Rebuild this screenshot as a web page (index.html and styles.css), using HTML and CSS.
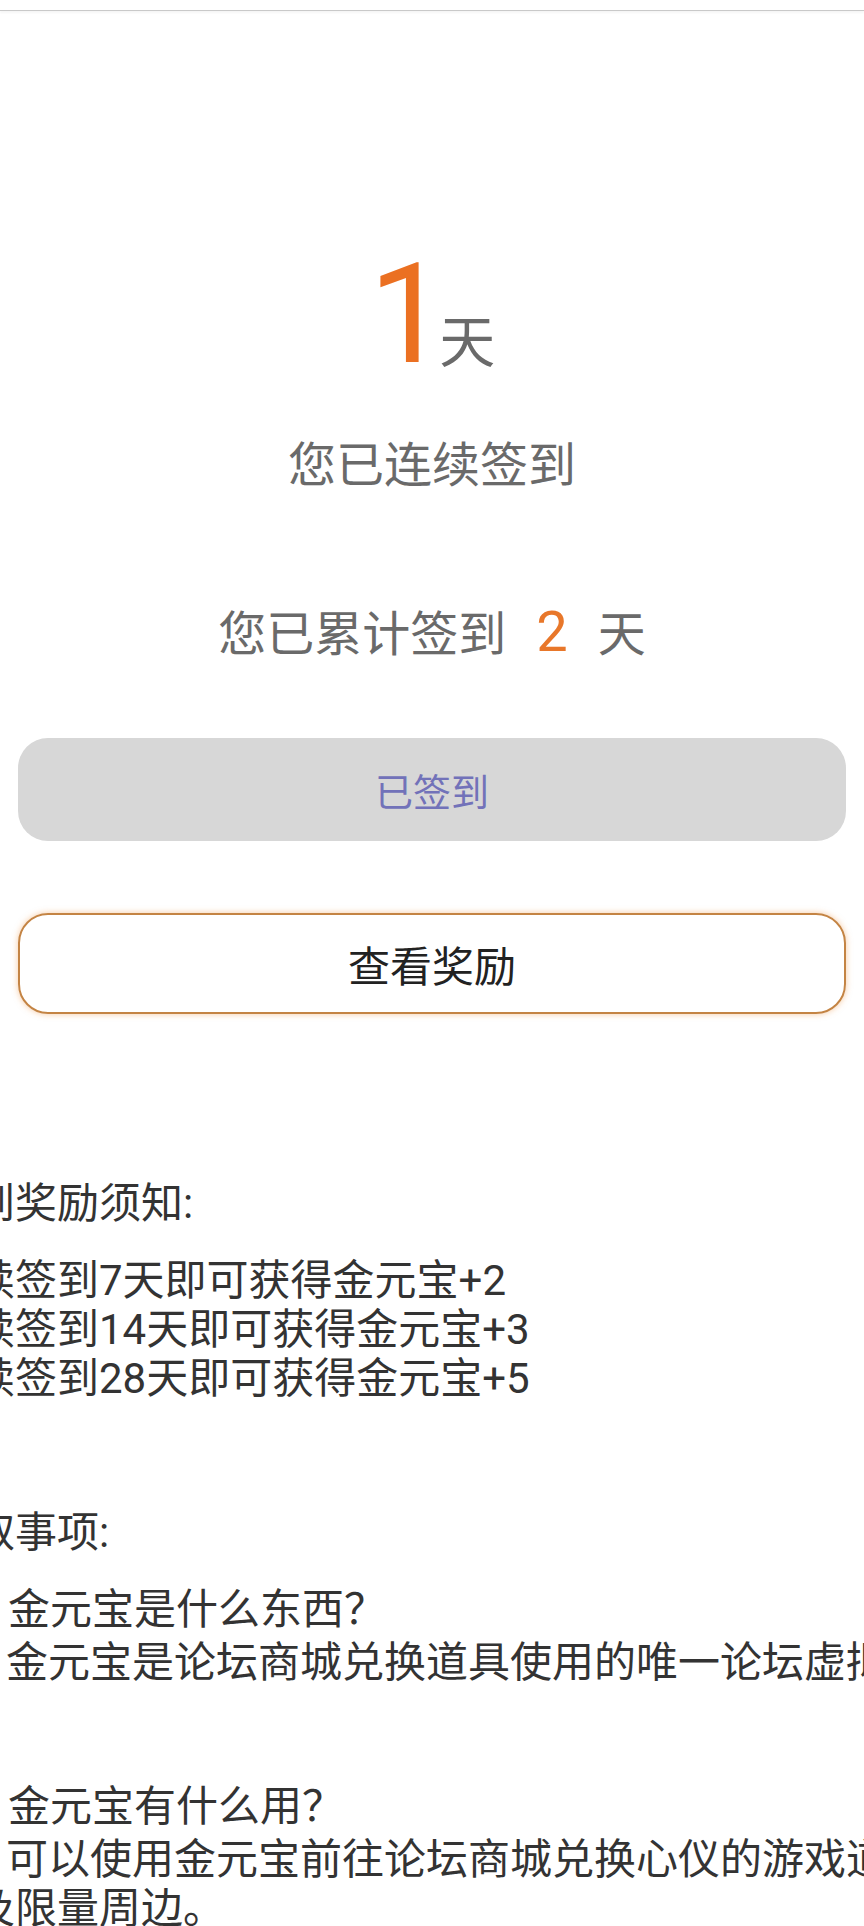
FILE: index.html
```html
<!DOCTYPE html>
<html lang="zh-CN">

<head>
    <meta charset="UTF-8">
    <meta name="viewport" content="width=device-width, initial-scale=1.0">
    <title>每日签到</title>
    <link rel="stylesheet" href="styles.css">
</head>

<body>
    <div class="topbar"></div>

    <div class="sign">
        <div class="days"><span class="days-num">1</span><span class="days-unit">天</span></div>
        <p class="streak">您已连续签到</p>
        <p class="total">您已累计签到<span class="total-num">2</span>天</p>
        <div class="btn btn-done">已签到</div>
        <div class="btn btn-reward">查看奖励</div>
    </div>

    <div class="notes">
        <p class="notes-title first">签到奖励须知:</p>
        <ul class="rule-list">
            <li>连续签到7天即可获得金元宝+2</li>
            <li>连续签到14天即可获得金元宝+3</li>
            <li>连续签到28天即可获得金元宝+5</li>
        </ul>

        <p class="notes-title">领取事项:</p>
        <div class="qa">
            <p class="q">金元宝是什么东西？</p>
            <p class="a">金元宝是论坛商城兑换道具使用的唯一论坛虚拟货币。</p>
        </div>
        <div class="qa">
            <p class="q">金元宝有什么用？</p>
            <p class="a">可以使用金元宝前往论坛商城兑换心仪的游戏道具以</p>
            <p class="a-wrap">及限量周边。</p>
        </div>
    </div>
</body>

</html>
```

FILE: styles.css
```css
body {
    font-family: Roboto, "Noto Sans CJK SC", sans-serif;
    background-color: #fff;
    margin: 0;
    padding: 0;
    overflow: hidden;
}

p {
    margin: 0;
}

.topbar {
    height: 10px;
    border-bottom: 1px solid #c9c9c9;
    box-shadow: 0 2px 2px rgba(0, 0, 0, 0.04);
}

.sign {
    text-align: center;
    padding: 0 18px;
}

.days {
    margin-top: 233px;
    font-size: 140px;
    line-height: 140px;
}

.days-num {
    color: #eb7022;
    letter-spacing: -8px;
}

.days-unit {
    font-size: 56px;
    line-height: 1;
    color: #6a6a6a;
}

.streak {
    margin-top: 52px;
    font-size: 48px;
    line-height: 60px;
    color: #6a6a6a;
}

.total {
    margin-top: 106px;
    font-size: 48px;
    line-height: 60px;
    color: #6a6a6a;
}

.total-num {
    font-size: 56px;
    color: #e8772a;
    margin: 0 30px;
}

.btn {
    display: flex;
    align-items: center;
    justify-content: center;
    box-sizing: border-box;
    border-radius: 30px;
}

.btn-done {
    margin-top: 73px;
    height: 103px;
    background-color: #d7d7d7;
    color: #7272b9;
    font-size: 38px;
}

.btn-reward {
    margin-top: 72px;
    height: 101px;
    border: 2px solid #c48444;
    box-shadow: 0 0 6px rgba(240, 150, 70, 0.5);
    color: #222;
    font-size: 42px;
}

.notes {
    margin-top: 165px;
    margin-left: -69px;
    font-size: 42px;
    line-height: 49px;
    color: #333;
    white-space: nowrap;
}

.notes-title {
    margin-top: 105px;
    margin-bottom: 28px;
}

.notes-title.first {
    margin-top: 0;
}

.rule-list {
    list-style: none;
    margin: 0;
    padding: 0;
}

.qa + .qa {
    margin-top: 95px;
}

.q {
    padding-left: 77px;
}

.a {
    margin-top: 4px;
    padding-left: 75px;
}

.a-wrap {
    padding-left: 42px;
}
```
